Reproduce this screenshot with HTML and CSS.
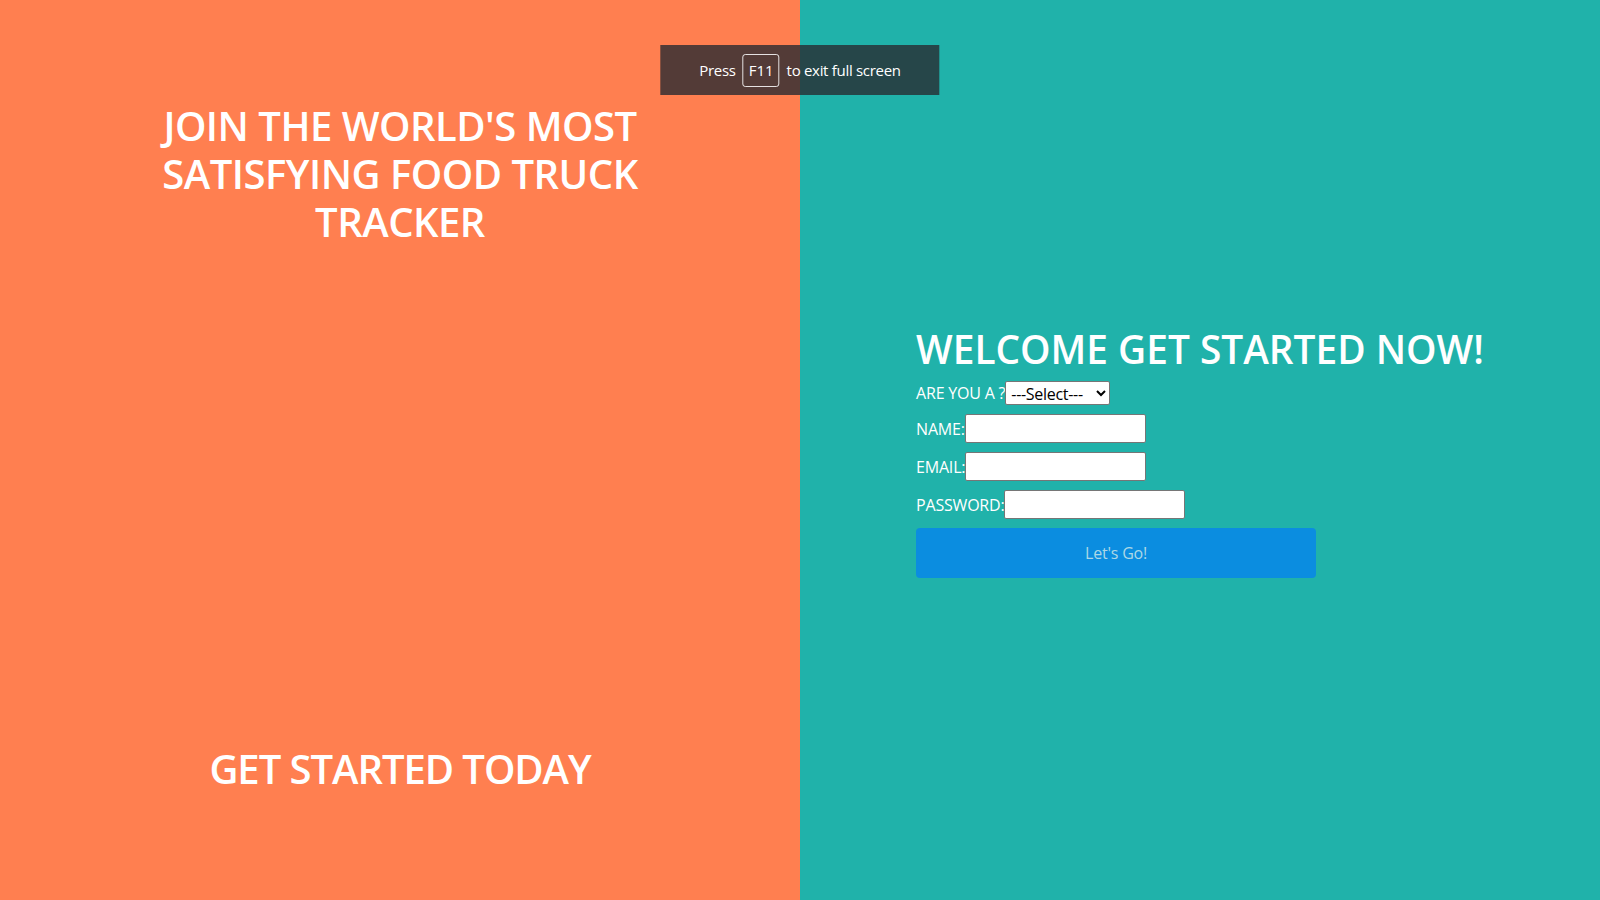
FILE: index.html
```html
<!DOCTYPE html>
<html lang="en">
<head>
<meta charset="utf-8">
<title>Food Truck Tracker</title>
<link rel="stylesheet" href="styles.css">
</head>
<body>
<main class="page">
  <section class="promo">
    <h1 class="promo-title">JOIN THE WORLD'S MOST SATISFYING FOOD TRUCK TRACKER</h1>
    <h1 class="promo-cta">GET STARTED TODAY</h1>
  </section>
  <section class="signup">
    <form class="signup-form">
      <h1 class="signup-title">WELCOME GET STARTED NOW!</h1>
      <div class="row row-select">
        <label for="role">ARE YOU A ?</label>
        <select id="role" class="role-select">
          <option>---Select---</option>
          <option>Diner</option>
          <option>Operator</option>
        </select>
      </div>
      <div class="row">
        <label for="name">NAME:</label>
        <input id="name" class="field" type="text">
      </div>
      <div class="row">
        <label for="email">EMAIL:</label>
        <input id="email" class="field" type="email">
      </div>
      <div class="row">
        <label for="password">PASSWORD:</label>
        <input id="password" class="field" type="password">
      </div>
      <button type="button" class="submit">Let's Go!</button>
    </form>
  </section>
  <div class="fs-toast">
    <span>Press</span>
    <span class="key">F11</span>
    <span>to exit full screen</span>
  </div>
</main>
</body>
</html>
```

FILE: styles.css
```css
html, body {
  margin: 0;
  padding: 0;
  height: 100%;
}

body {
  font-family: "Open Sans", "Noto Sans", "Liberation Sans", sans-serif;
  color: #fff;
}

.page {
  display: flex;
  height: 100vh;
  position: relative;
  overflow: hidden;
}

.promo {
  flex: 1;
  background: #ff7f50;
  display: flex;
  flex-direction: column;
  justify-content: space-between;
  align-items: center;
  padding: 102px 0 107px;
  box-sizing: border-box;
}

.promo-title,
.promo-cta {
  margin: 0;
  font-size: 40px;
  line-height: 48px;
  font-weight: 600;
  text-align: center;
  letter-spacing: -0.5px;
}

.promo-title {
  width: 500px;
}

.promo-cta {
  letter-spacing: -1.05px;
}

.signup {
  flex: 1;
  background: #20b2aa;
  display: flex;
  justify-content: center;
  align-items: center;
  padding-top: 4px;
}

.signup-form {
  display: flex;
  flex-direction: column;
  gap: 9px;
  font-size: 16px;
}

.signup-title {
  margin: 0;
  font-size: 38.8px;
  line-height: 46px;
  font-weight: 600;
  white-space: nowrap;
}

.row {
  display: flex;
  align-items: center;
  height: 29px;
}

.row-select {
  height: 24px;
}

.row label {
  font-size: 16px;
  letter-spacing: -0.2px;
}

.role-select {
  width: 105px;
  height: 24px;
  font-family: inherit;
  font-size: 16px;
  letter-spacing: -0.3px;
  color: #000;
  background: #fff;
  border: 1px solid #767676;
  border-radius: 2px;
  padding: 0 1px;
  margin: 0;
}

.field {
  width: 181px;
  height: 29px;
  box-sizing: border-box;
  border: 1px solid #767676;
  border-radius: 2px;
  background: #fff;
  margin: 0;
  padding: 1px 4px;
  font-size: 15px;
}

.submit {
  width: 400px;
  height: 50px;
  border: none;
  border-radius: 4px;
  background: #0b8de0;
  color: #add8e6;
  font-family: inherit;
  font-size: 16px;
  letter-spacing: -0.2px;
  cursor: pointer;
}

.fs-toast {
  position: absolute;
  top: 45px;
  left: 50%;
  transform: translateX(-50%);
  height: 50px;
  padding: 0 39px;
  display: flex;
  align-items: center;
  gap: 7px;
  background: rgba(40, 43, 49, 0.8);
  color: #fff;
  font-size: 15px;
  letter-spacing: -0.3px;
  white-space: nowrap;
}

.key {
  display: inline-flex;
  align-items: center;
  justify-content: center;
  height: 33px;
  padding: 0 5px;
  border: 1px solid rgba(255, 255, 255, 0.85);
  border-radius: 3px;
  box-sizing: border-box;
  letter-spacing: 0;
}
```
